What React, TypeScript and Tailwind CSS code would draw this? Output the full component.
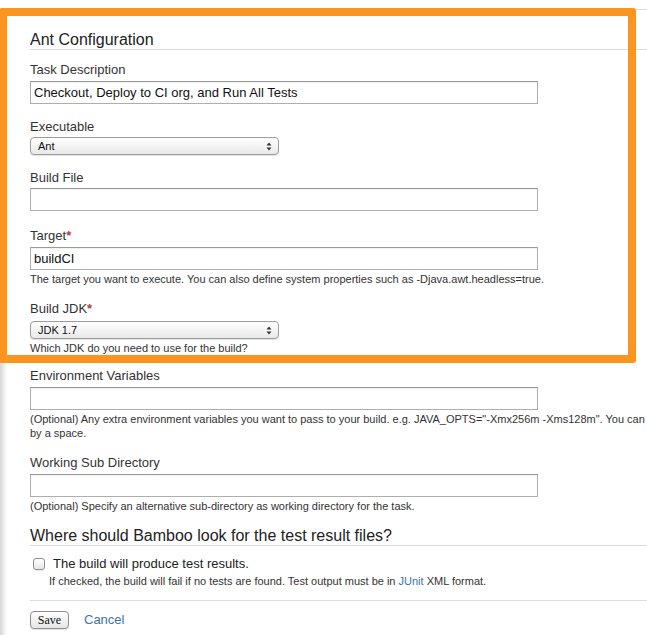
import React from "react";

const Label = ({ children, req, className = "" }: { children: React.ReactNode; req?: boolean; className?: string }) => (
  <div className={`text-[13px] leading-[16px] text-[#333] ${className}`}>
    {children}
    {req && <span className="text-[#b0403a] font-bold">*</span>}
  </div>
);

const Input = ({ value = "", className = "" }: { value?: string; className?: string }) => (
  <div
    className={`w-[508px] h-[23px] border border-[#aeaeae] border-t-[#999] bg-white flex items-center pl-[3px] text-[13px] text-[#111] shadow-[inset_0_1px_1px_rgba(0,0,0,0.06)] ${className}`}
  >
    {value}
  </div>
);

const Arrows = () => (
  <svg width="6" height="9" viewBox="0 0 6 9" className="shrink-0">
    <path d="M3 0.5 L5.5 3.5 L0.5 3.5 Z" fill="#333" />
    <path d="M3 8.5 L5.5 5.5 L0.5 5.5 Z" fill="#333" />
  </svg>
);

const Select = ({ value, className = "" }: { value: string; className?: string }) => (
  <div
    className={`w-[249px] h-[18px] rounded-[4px] border border-[#9c9c9c] bg-gradient-to-b from-white to-[#e9e9e9] shadow-[0_1px_1px_rgba(0,0,0,0.12)] flex items-center justify-between pl-[7px] pr-[6px] text-[11px] text-[#111] ${className}`}
  >
    <span>{value}</span>
    <Arrows />
  </div>
);

const Help = ({ children, className = "" }: { children: React.ReactNode; className?: string }) => (
  <div className={`text-[11px] leading-[14px] text-[#333] ${className}`}>{children}</div>
);

export default function App() {
  return (
    <div className="relative w-[647px] h-[635px] overflow-hidden bg-white font-['Liberation_Sans',Arial,sans-serif] text-[#333]">
      <div className="absolute left-0 top-[10px] bottom-0 w-[7px] bg-gradient-to-r from-[#d6d6d6] to-white" />
      <div className="relative mt-[9px] border-t border-[#dddddd] pl-[30px] w-[1100px]">
        <h2 className="mt-[20px] text-[16px] leading-[19px] text-[#222] border-b border-[#dddddd]">Ant Configuration</h2>

        <Label className="mt-[12px]">Task Description</Label>
        <Input className="mt-[3px]" value="Checkout, Deploy to CI org, and Run All Tests" />

        <Label className="mt-[15px]">Executable</Label>
        <Select className="mt-[2px]" value="Ant" />

        <Label className="mt-[15px]">Build File</Label>
        <Input className="mt-[2px]" />

        <Label className="mt-[17px]" req>
          Target
        </Label>
        <Input className="mt-[3px]" value="buildCI" />
        <Help className="mt-[2px]">
          The target you want to execute. You can also define system properties such as -Djava.awt.headless=true.
        </Help>

        <Label className="mt-[15px]" req>
          Build JDK
        </Label>
        <Select className="mt-[4px]" value="JDK 1.7" />
        <Help className="mt-[2px]">Which JDK do you need to use for the build?</Help>

        <Label className="mt-[13px]">Environment Variables</Label>
        <Input className="mt-[3px]" />
        <div className="mt-[3px] text-[11px] leading-[13.5px] text-[#333]">
          <div className="whitespace-nowrap">
            (Optional) Any extra environment variables you want to pass to your build. e.g. JAVA_OPTS="-Xmx256m -Xms128m". You can
          </div>
          <div>by a space.</div>
        </div>

        <Label className="mt-[15px]">Working Sub Directory</Label>
        <Input className="mt-[3px]" />
        <Help className="mt-[2px]">(Optional) Specify an alternative sub-directory as working directory for the task.</Help>

        <h2 className="mt-[13px] text-[16px] leading-[19px] text-[#222] border-b border-[#dddddd]">
          Where should Bamboo look for the test result files?
        </h2>

        <div className="mt-[10px] flex items-center h-[16px]">
          <div className="ml-[3px] w-[12px] h-[12px] rounded-[3px] border border-[#8f8f8f] bg-gradient-to-b from-white to-[#e6e6e6] shadow-[0_1px_1px_rgba(0,0,0,0.1)]" />
          <span className="ml-[8px] text-[13px] leading-[16px] text-[#222]">The build will produce test results.</span>
        </div>
        <Help className="mt-[2px] ml-[19px]">
          If checked, the build will fail if no tests are found. Test output must be in{" "}
          <span className="text-[#3b73af]">JUnit</span> XML format.
        </Help>

        <div className="mt-[12px] border-t border-[#dddddd]" />

        <div className="mt-[10px] flex items-center">
          <div className="w-[39px] h-[18px] rounded-[4px] border border-[#8e8e8e] bg-gradient-to-b from-white to-[#e6e6e6] shadow-[0_1px_1px_rgba(0,0,0,0.12)] flex items-center justify-center font-['Liberation_Serif',serif] text-[12px] text-[#111]">
            Save
          </div>
          <span className="ml-[15px] text-[13px] leading-[16px] text-[#3b73af]">Cancel</span>
        </div>
      </div>

      <div className="absolute left-[-1px] top-[8px] w-[637px] h-[355px] border-[8px] border-[#fb951f] rounded-[3px] pointer-events-none" />
    </div>
  );
}
